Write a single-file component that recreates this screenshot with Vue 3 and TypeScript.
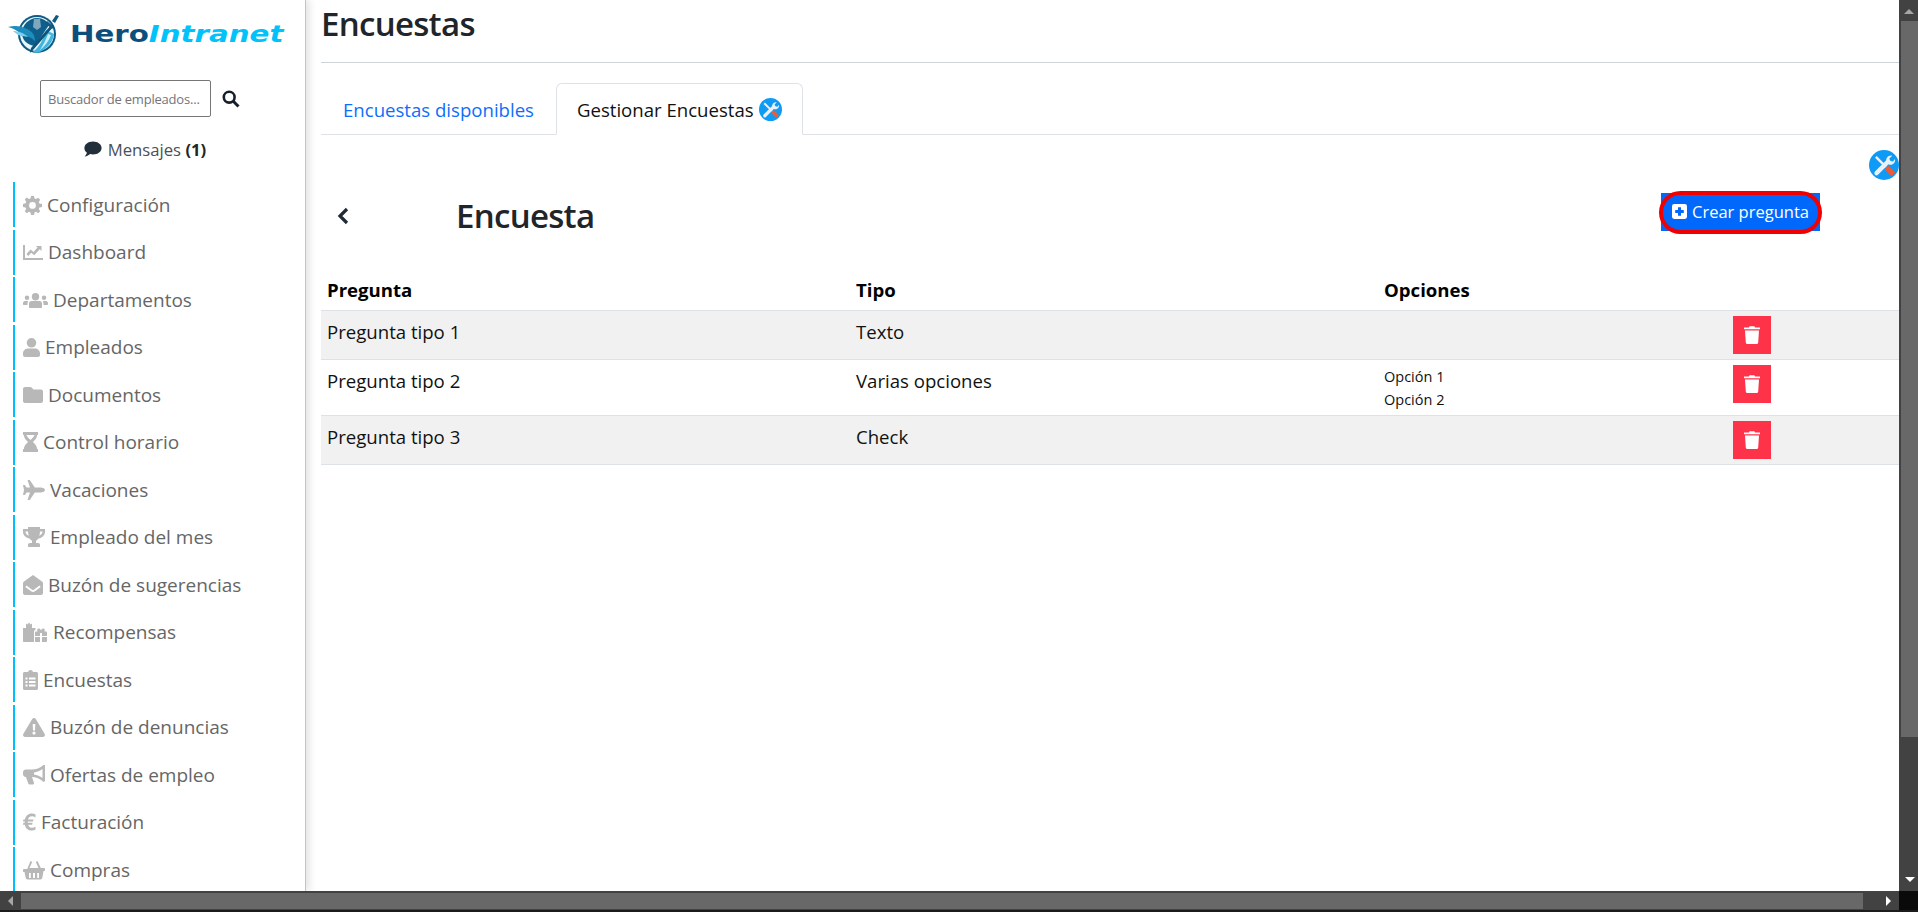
<script setup lang="ts">
const menu = [
  { label: 'Configuración', icon: 'gear', w: 19 },
  { label: 'Dashboard', icon: 'chart', w: 20 },
  { label: 'Departamentos', icon: 'users', w: 25 },
  { label: 'Empleados', icon: 'user', w: 17 },
  { label: 'Documentos', icon: 'folder', w: 20 },
  { label: 'Control horario', icon: 'hourglass', w: 15 },
  { label: 'Vacaciones', icon: 'plane', w: 22 },
  { label: 'Empleado del mes', icon: 'trophy', w: 22 },
  { label: 'Buzón de sugerencias', icon: 'envelope', w: 20 },
  { label: 'Recompensas', icon: 'gifts', w: 25 },
  { label: 'Encuestas', icon: 'clipboard', w: 15 },
  { label: 'Buzón de denuncias', icon: 'warning', w: 22 },
  { label: 'Ofertas de empleo', icon: 'bullhorn', w: 22 },
  { label: 'Facturación', icon: 'euro', w: 13 },
  { label: 'Compras', icon: 'basket', w: 22 },
];

const rows = [
  { q: 'Pregunta tipo 1', type: 'Texto', options: [] as string[] },
  { q: 'Pregunta tipo 2', type: 'Varias opciones', options: ['Opción 1', 'Opción 2'] },
  { q: 'Pregunta tipo 3', type: 'Check', options: [] as string[] },
];
</script>

<template>
  <div class="screen">
    <div class="upper">
      <aside class="sidebar">
        <div class="logo">
          <svg class="logo-mark" viewBox="0 0 52 42">
            <circle cx="29" cy="21" r="19" fill="#0d5c86" />
            <circle cx="29" cy="21" r="17" fill="#e6f6fb" />
            <path d="M14 20c0-8 7-15 15-15 6 0 10 3 12 7L27 33c-8-1-13-6-13-13z" fill="#0f5f8c" />
            <path d="M26 6h6l1 8-4 3-4-3z" fill="#7fa8bd" />
            <path d="M0 14c7-2 13-1 19 2 5 2 8 6 8 12-4-4-9-6-14-5 1-3-6-7-13-9z" fill="#1d8dbd" />
            <path d="M5 18c5 0 11 2 15 6-3-1-7-1-10-2z" fill="#7dd0ea" />
            <path d="M38 17l8 4c-1 9-8 16-17 19l-4-1c6-5 11-13 13-22z" fill="#43b4dd" />
            <path d="M40 21l3 1c-2 6-6 11-11 15 3-5 6-10 8-16z" fill="#c9eef8" />
            <path d="M25 37l-3 3 1-5 21-24 2 2z" fill="#0f5378" />
            <path d="M39 8l7 6-2 2-7-6zM44 8l4-6 3 1-4 7z" fill="#125a80" />
          </svg>
          <span class="logo-text"><b>Hero</b><i>Intranet</i></span>
        </div>
        <div class="search">
          <input class="search-input" placeholder="Buscador de empleados..." />
          <svg class="search-icon" viewBox="0 0 18 18">
            <circle cx="7.200" cy="7.200" r="5.400" fill="none" stroke="#15202b" stroke-width="2.600" />
            <path d="M11.300 11.300l5.200 5.200" stroke="#15202b" stroke-width="3" />
          </svg>
        </div>
        <div class="messages">
          <svg class="msg-icon" viewBox="0 0 18 16">
            <path d="M9 .5c4.800 0 8.600 2.900 8.600 6.500S13.800 13.500 9 13.500c-1 0-2-.1-2.900-.4C4.900 14.300 3 15.400.6 15.500c1-1 2-2.400 2.300-3.700C1.300 10.600.4 8.900.4 7 .4 3.400 4.200.5 9 .5z" fill="#212f3a" />
          </svg>
          <span>Mensajes <b>(1)</b></span>
        </div>
        <nav class="menu">
          <a v-for="item in menu" :key="item.label" class="menu-item">
            <svg class="menu-icon" :style="{ width: item.w + 'px' }" :viewBox="`0 0 ${item.w} 20`">
              <path v-if="item.icon === 'gear'" d="M8 1h3l.5 2.500 1.500.6 2.200-1.400 2 2-1.400 2.200.6 1.500 2.600.6v3l-2.600.5-.6 1.500 1.400 2.200-2 2-2.200-1.400-1.500.6L11 20H8l-.5-2.600-1.500-.6-2.200 1.400-2-2 1.400-2.200-.6-1.500L0 11.900v-3l2.600-.6.6-1.500-1.400-2.200 2-2L6 4.100l1.500-.6zM9.500 7a3.400 3.400 0 100 6.800 3.400 3.400 0 000-6.800z" fill-rule="evenodd" />
              <path v-else-if="item.icon === 'chart'" d="M0 3h2v13h18v2H0zM3.500 12l4-4.500 3 2.500 4-4.500-1.500-1.500h5.500V9l-1.700-1.700-5.600 6-3-2.500-3 3.300z" />
              <path v-else-if="item.icon === 'users'" d="M12.500 3a3.700 3.700 0 110 7.400 3.700 3.700 0 010-7.400zM4 5.500a2.300 2.300 0 110 4.600 2.300 2.300 0 010-4.600zM21 5.500a2.300 2.300 0 110 4.600 2.300 2.300 0 010-4.600zM8.500 11h8c1.500 0 2.500 1 2.500 2.500V17c0 .6-.4 1-1 1H7c-.6 0-1-.4-1-1v-3.500C6 12 7 11 8.500 11zM2 11h3.500c-.8.700-1 1.600-1 2.700V15H1c-.6 0-1-.4-1-1v-1c0-1 1-2 2-2zM19.500 11H23c1 0 2 1 2 2v1c0 .6-.4 1-1 1h-3.500v-1.300c0-1.100-.2-2-1-2.700z" />
              <path v-else-if="item.icon === 'user'" d="M8.500 1a4.800 4.800 0 110 9.600A4.800 4.800 0 018.500 1zM5 11.500h7c2.800 0 5 2.200 5 5V18c0 1-.8 2-2 2H2c-1.200 0-2-1-2-2v-1.500c0-2.800 2.200-5 5-5z" />
              <path v-else-if="item.icon === 'folder'" d="M2 2h6l2.500 2.500H18c1.100 0 2 .9 2 2V16c0 1.100-.9 2-2 2H2c-1.100 0-2-.9-2-2V4c0-1.100.9-2 2-2z" />
              <path v-else-if="item.icon === 'hourglass'" d="M0 0h15v3h-1c0 4-3 5.500-4 7 1 1.500 4 3 4 7h1v3H0v-3h1c0-4 3-5.500 4-7-1-1.500-4-3-4-7H0zM3.500 3c.4 1.400 1.200 2.400 4 5 2.800-2.600 3.600-3.600 4-5z" fill-rule="evenodd" />
              <path v-else-if="item.icon === 'plane'" d="M4.500 0h2.300l5 7.500h6c2 0 4.200 1.200 4.200 2.500s-2.200 2.500-4.200 2.500h-6l-5 7.500H4.500L7 12.500H3.500L1.800 15H0l1-5-1-5h1.800l1.700 2.500H7z" />
              <path v-else-if="item.icon === 'trophy'" d="M5 0h12v2h5v3c0 3-3 6-6.500 6.500-.7 1-1.500 1.700-2.500 2.200V16h2c1.200 0 2 .8 2 2v2H5v-2c0-1.200.8-2 2-2h2v-2.300c-1-.5-1.800-1.200-2.500-2.200C3 11 0 8 0 5V2h5zM2.500 4.500V5c0 1.400 1.400 3 3.200 3.700-.4-1.200-.6-2.600-.7-4.200zM19.500 4.500H17c-.1 1.600-.3 3-.7 4.200 1.800-.7 3.200-2.300 3.200-3.700z" fill-rule="evenodd" />
              <path v-else-if="item.icon === 'envelope'" d="M10 0l9 6.500c.6.400 1 1.100 1 1.800V18c0 1.100-.9 2-2 2H2c-1.100 0-2-.9-2-2V8.300c0-.7.400-1.400 1-1.800zM3.500 10.500l-1.200 1.600L8 16.300c1.200.9 2.800.9 4 0l5.700-4.200-1.200-1.600-5.700 4.200c-.5.300-1.100.3-1.600 0z" fill-rule="evenodd" />
              <path v-else-if="item.icon === 'gifts'" d="M0 6h3V1.500l1.500 1L6 .5l1.500 2 1.500-1V6h3.500v1.500C11.500 8 11 9 11 10v10H1c-.6 0-1-.4-1-1zM12 10.500c0-.6.500-1 1-1h1.500c-.7-1.300-.2-3 1.300-3 .8 0 1.500.5 2.200 2 .7-1.500 1.400-2 2.200-2 1.500 0 2 1.700 1.300 3H23c.5 0 1 .4 1 1V14h-5v-3h-2v3h-5zM12 15h5v5h-4c-.6 0-1-.4-1-1zM19 15h5v4c0 .6-.4 1-1 1h-4z" />
              <path v-else-if="item.icon === 'clipboard'" d="M5 2c.3-1.200 1.300-2 2.500-2S9.700.8 10 2h3.500c.8 0 1.500.7 1.500 1.500V18.500c0 .8-.7 1.500-1.500 1.500h-12C.7 20 0 19.300 0 18.500V3.500C0 2.700.7 2 1.500 2zM2.500 7.500v2h2v-2zM6 7.500v2h6.500v-2zM2.500 11v2h2v-2zM6 11v2h6.500v-2zM2.500 14.500v2h2v-2zM6 14.500v2h6.500v-2z" fill-rule="evenodd" />
              <path v-else-if="item.icon === 'warning'" d="M11 1c.8 0 1.400.4 1.800 1.100l8.900 15c.7 1.300-.2 2.900-1.700 2.900H2c-1.500 0-2.400-1.600-1.700-2.900l8.900-15C9.600 1.400 10.200 1 11 1zM9.700 7l.3 6.500h2l.3-6.500zM11 14.500a1.600 1.600 0 100 3.200 1.600 1.600 0 000-3.200z" fill-rule="evenodd" />
              <path v-else-if="item.icon === 'bullhorn'" d="M22 0v16l-1.500 1C17 13.500 13 12 9 12l2 6c.2.700-.3 1.500-1 1.500H6.500c-.5 0-1-.3-1.200-.8L3 12c-1.700 0-3-1.300-3-3V7.500c0-1.700 1.300-3 3-3h6c4 0 8-1.500 11.500-4.500zM19.500 4C17 5.800 14 7 11 7.400v2.200c3 .4 6 1.600 8.500 3.400z" fill-rule="evenodd" />
              <path v-else-if="item.icon === 'euro'" d="M12.500 2.500v3C11.500 4.700 10.300 4.300 9 4.300c-2 0-3.500 1.100-4 3.200h5.500l-.5 2H4.800v1.200h4.800l-.4 2H5.100c.6 2 2 3.100 4 3.100 1.300 0 2.500-.4 3.400-1.200v3c-1 .7-2.300 1-3.700 1-3.600 0-6.200-2.300-7-5.900H0l.4-2h1.400V9.500H0l.4-2h1.500C2.700 3.800 5.300 1.500 8.900 1.500c1.400 0 2.600.3 3.600 1z" />
              <path v-else d="M7.500 1l1.700 1L6.500 8h9l-2.700-6 1.700-1 3.300 7H21c.6 0 1 .4 1 1v1c0 .6-.4 1-1 1h-.5l-1.200 6.800c-.2 1-1 1.700-2 1.700H4.700c-1 0-1.800-.7-2-1.700L1.500 12H1c-.6 0-1-.4-1-1v-1c0-.6.400-1 1-1h3.200zM6 13v5h1.800v-5zM10 13v5h2v-5zM14.200 13v5H16v-5z" fill-rule="evenodd" />
            </svg>
            <span>{{ item.label }}</span>
          </a>
        </nav>
      </aside>

      <main class="content">
        <h1 class="page-title">Encuestas</h1>
        <hr class="title-rule" />
        <div class="tabs">
          <a class="tab">Encuestas disponibles</a>
          <a class="tab active">
            Gestionar Encuestas
            <svg class="tools" viewBox="0 0 24 24">
              <circle cx="12" cy="12" r="12" fill="#0f9bf5" />
              <path d="M5.500 5.500l8 8" stroke="#e9f1f5" stroke-width="2" />
              <path d="M6 18.500l9-9" stroke="#e9f1f5" stroke-width="3.400" stroke-linecap="round" />
              <path d="M14 9.500c-1-3 1.500-5.500 4.500-5l-2.300 2.400 1 1.800 2 .4 1.600-2c.6 3-2 5.500-5 4.400z" fill="#e9f1f5" />
              <path d="M14 14l5.500 5.500" stroke="#ef5b35" stroke-width="4" />
            </svg>
          </a>
        </div>
        <div class="tools-row">
          <svg class="tools big" viewBox="0 0 24 24">
            <circle cx="12" cy="12" r="12" fill="#0f9bf5" />
            <path d="M5.500 5.500l8 8" stroke="#e9f1f5" stroke-width="2" />
            <path d="M6 18.500l9-9" stroke="#e9f1f5" stroke-width="3.400" stroke-linecap="round" />
            <path d="M14 9.500c-1-3 1.500-5.500 4.500-5l-2.300 2.400 1 1.800 2 .4 1.600-2c.6 3-2 5.500-5 4.400z" fill="#e9f1f5" />
            <path d="M14 14l5.500 5.500" stroke="#ef5b35" stroke-width="4" />
          </svg>
        </div>
        <div class="survey-head">
          <svg class="back" viewBox="0 0 12 18">
            <path d="M10 2L3 9l7 7" fill="none" stroke="#212b36" stroke-width="3.200" />
          </svg>
          <h2 class="survey-title">Encuesta</h2>
          <button class="create">
            <svg viewBox="0 0 14 14">
              <rect width="14" height="14" rx="2" fill="#fff" />
              <path d="M7 3v8M3 7h8" stroke="#0069fb" stroke-width="2.800" />
            </svg>
            Crear pregunta
          </button>
        </div>
        <table class="questions">
          <thead>
            <tr>
              <th class="c1">Pregunta</th>
              <th class="c2">Tipo</th>
              <th class="c3">Opciones</th>
              <th></th>
            </tr>
          </thead>
          <tbody>
            <tr v-for="row in rows" :key="row.q">
              <td>{{ row.q }}</td>
              <td>{{ row.type }}</td>
              <td class="options">
                <div v-for="o in row.options" :key="o">{{ o }}</div>
              </td>
              <td>
                <button class="delete" aria-label="Eliminar">
                  <svg viewBox="0 0 16 18">
                    <path d="M0 3.200V1.500h5L5.600.3h4.800l.6 1.200h5v1.700z" fill="#fff" />
                    <path d="M1 4.500h14l-.8 12c0 .9-.7 1.500-1.500 1.500H3.300c-.8 0-1.500-.6-1.500-1.500z" fill="#fff" />
                  </svg>
                </button>
              </td>
            </tr>
          </tbody>
        </table>
      </main>

      <div class="vscroll">
        <div class="arrow-up"></div>
        <div class="vthumb"></div>
        <div class="arrow-down"></div>
      </div>
    </div>
    <div class="hscroll">
      <div class="arrow-left"></div>
      <div class="hthumb"></div>
      <div class="arrow-right"></div>
      <div class="corner"></div>
    </div>
  </div>
</template>

<style>
html, body { margin: 0; overflow: hidden; background: #fff; }
</style>

<style scoped>
.screen {
  width: 1918px;
  height: 912px;
  display: flex;
  flex-direction: column;
  overflow: hidden;
  font-family: "Open Sans", "Noto Sans", sans-serif;
  color: #212529;
}

.upper {
  flex: 1;
  min-height: 0;
  display: flex;
}

.sidebar {
  width: 306px;
  flex-shrink: 0;
  box-sizing: border-box;
  border-right: 1px solid #c4c4c4;
  box-shadow: 3px 0 8px rgba(0, 0, 0, 0.12);
  overflow: hidden;
  padding-top: 13px;
}

.logo {
  display: flex;
  align-items: center;
  height: 42px;
  padding-left: 8px;
}

.logo-mark {
  width: 52px;
  height: 42px;
  flex-shrink: 0;
}

.logo-text {
  margin-left: 10px;
  font-family: "DejaVu Sans", sans-serif;
  font-size: 23.500px;
  white-space: nowrap;
  transform: scaleX(1.245);
  transform-origin: left center;
}

.logo-text b {
  color: #0d4f7c;
  font-weight: 700;
}

.logo-text i {
  color: #00c3fb;
  font-weight: 700;
}

.search {
  display: flex;
  align-items: center;
  margin-top: 25px;
  padding-left: 40px;
}

.search-input {
  box-sizing: border-box;
  width: 171px;
  height: 37px;
  padding: 0 7px;
  border: 1px solid #767676;
  border-radius: 2px;
  font: 13px "Open Sans", sans-serif;
  letter-spacing: -0.200px;
}

.search-input::placeholder {
  color: #757575;
  opacity: 1;
}

.search-icon {
  width: 18px;
  height: 18px;
  margin-left: 11px;
}

.messages {
  display: flex;
  justify-content: center;
  align-items: center;
  gap: 6px;
  margin-top: 19px;
  padding-right: 15px;
  height: 26px;
  font-size: 16.700px;
  color: #495057;
}

.messages b {
  color: #212529;
}

.msg-icon {
  width: 18px;
  height: 16px;
}

.menu {
  margin: 20px 0 0 13px;
  display: flex;
  flex-direction: column;
  gap: 2.500px;
}

.menu-item {
  display: flex;
  align-items: center;
  gap: 5px;
  height: 45px;
  flex-shrink: 0;
  padding-left: 8px;
  border-left: 2px solid #00bfff;
  font-size: 19px;
  color: #666;
}

.menu-icon {
  height: 20px;
  fill: #b8b8b8;
  flex-shrink: 0;
}

.content {
  flex: 1;
  min-width: 0;
  padding-left: 15px;
  overflow: hidden;
}

.page-title {
  margin: 0;
  padding-top: 4px;
  height: 52px;
  box-sizing: border-box;
  font-size: 33px;
  line-height: 40px;
  font-weight: 600;
  letter-spacing: -0.700px;
}

.title-rule {
  margin: 10px 0 20px;
  border: 0;
  border-top: 1px solid #ced4da;
}

.tabs {
  display: flex;
  height: 52px;
  box-sizing: border-box;
  border-bottom: 1px solid #dee2e6;
}

.tab {
  display: flex;
  align-items: center;
  gap: 5px;
  padding: 1px 22px 0;
  font-size: 18.600px;
  color: #0d6efd;
  white-space: nowrap;
}

.tab.active {
  height: 52px;
  box-sizing: border-box;
  padding: 0 20px;
  background: #fff;
  border: 1px solid #dee2e6;
  border-bottom-color: #fff;
  border-radius: 6px 6px 0 0;
  color: #111;
}

.tools {
  width: 23px;
  height: 23px;
  flex-shrink: 0;
}

.tools.big {
  width: 30px;
  height: 30px;
}

.tools-row {
  display: flex;
  justify-content: flex-end;
  padding-top: 15px;
  height: 30px;
}

.survey-head {
  display: flex;
  align-items: center;
  height: 72px;
}

.back {
  width: 12px;
  height: 18px;
  margin-left: 16px;
}

.survey-title {
  margin: 0 0 2px 107px;
  font-size: 33px;
  font-weight: 600;
  letter-spacing: -0.700px;
  color: #212529;
}

.create {
  position: relative;
  display: flex;
  align-items: center;
  gap: 5px;
  width: 159px;
  height: 38px;
  margin: 0 79px 8px auto;
  padding: 0 0 2px 11px;
  box-sizing: border-box;
  background: #0069fb;
  color: #fff;
  border: 0;
  font: 16.500px "Open Sans", sans-serif;
  white-space: nowrap;
}

.create::after {
  content: "";
  position: absolute;
  left: -2px;
  right: -2px;
  top: -2px;
  bottom: -3px;
  border: 4px solid #f00000;
  border-radius: 22px;
}

.create svg {
  width: 15px;
  height: 15px;
  flex-shrink: 0;
}

.questions {
  width: 100%;
  margin-top: 20px;
  border-collapse: collapse;
  table-layout: fixed;
  color: #111;
}

.questions th {
  height: 38px;
  padding: 0 6px 2px;
  box-sizing: border-box;
  text-align: left;
  font-size: 18.600px;
  color: #000;
}

.questions .c1,
.questions .c2 {
  width: 529px;
  box-sizing: border-box;
}

.questions .c2 {
  width: 528px;
}

.questions .c3 {
  width: 349px;
  box-sizing: border-box;
}

.questions td {
  padding: 5px 6px;
  vertical-align: top;
  font-size: 18.600px;
  line-height: 32px;
  border-top: 1px solid #dee2e6;
}

.questions tbody tr:last-child td {
  border-bottom: 1px solid #dee2e6;
}

.questions tbody tr:nth-child(odd) td {
  background: #f1f1f1;
}

.questions td.options {
  padding-bottom: 4px;
  font-size: 14.500px;
  line-height: 23px;
}

.delete {
  display: flex;
  align-items: center;
  justify-content: center;
  width: 38px;
  height: 38px;
  padding: 0;
  border: 0;
  background: #fe3249;
}

.delete svg {
  width: 16px;
  height: 18px;
}

.vscroll {
  width: 19px;
  flex-shrink: 0;
  position: relative;
  background: #424242;
}

.vthumb {
  margin: 21px 0 0 2px;
  height: 716px;
  background: #686868;
}

.arrow-up {
  position: absolute;
  left: 5px;
  top: 9px;
  border-left: 5px solid transparent;
  border-right: 5px solid transparent;
  border-bottom: 5px solid #a6a6a6;
}

.arrow-down {
  position: absolute;
  left: 6px;
  bottom: 9px;
  border-left: 5px solid transparent;
  border-right: 5px solid transparent;
  border-top: 5px solid #fff;
}

.hscroll {
  height: 21px;
  flex-shrink: 0;
  display: flex;
  align-items: flex-start;
  background: #424242;
  border-bottom: 2px solid #1c1c1c;
  box-sizing: border-box;
}

.arrow-left {
  width: 0;
  height: 0;
  margin: 5px 8px 0 8px;
  border-top: 5px solid transparent;
  border-bottom: 5px solid transparent;
  border-right: 5px solid #a6a6a6;
}

.hthumb {
  width: 1842px;
  height: 16px;
  margin-top: 2px;
  background: #686868;
}

.arrow-right {
  width: 0;
  height: 0;
  margin: 5px 8px 0 23px;
  border-top: 5px solid transparent;
  border-bottom: 5px solid transparent;
  border-left: 5px solid #fff;
}

.corner {
  flex: 1;
  height: 19px;
  background: #0a0a0a;
}
</style>
